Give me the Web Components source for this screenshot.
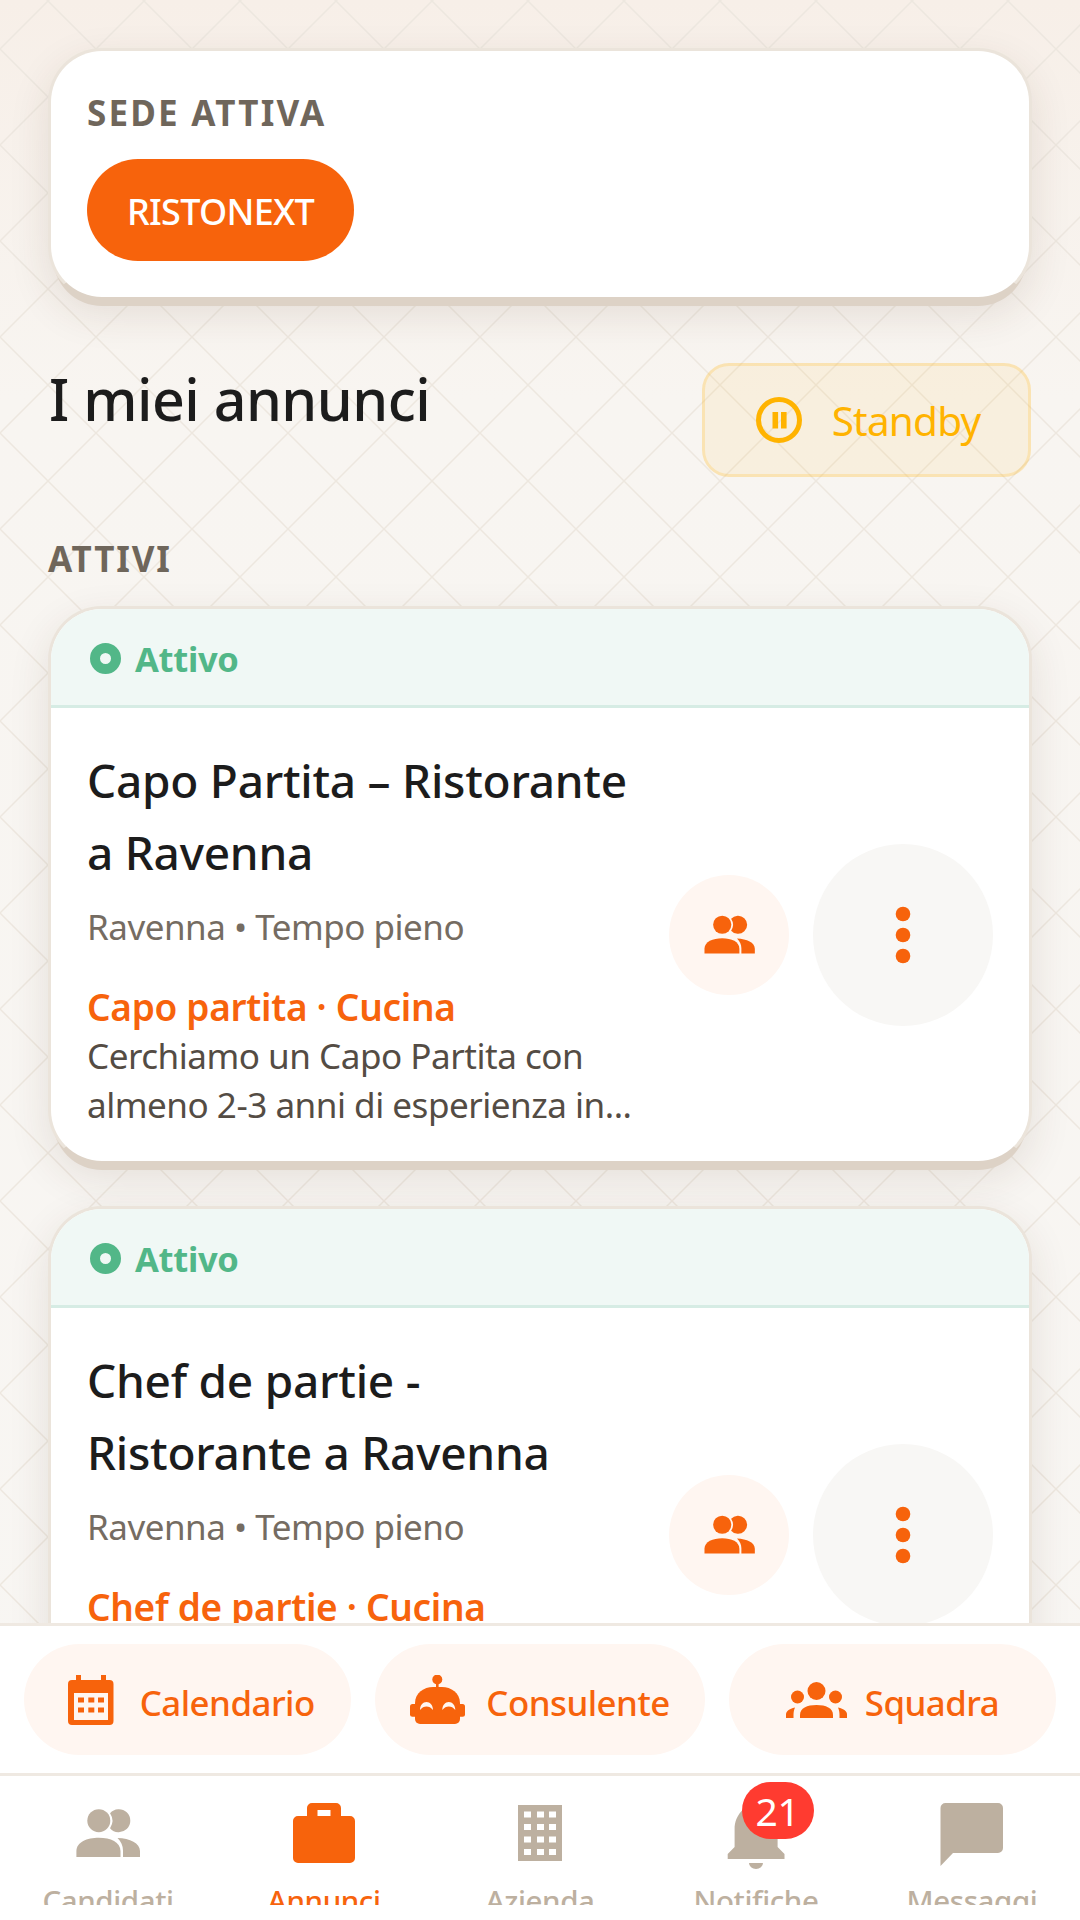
<!DOCTYPE html>
<html lang="it">
<head>
<meta charset="utf-8">
<title>I miei annunci</title>
<style>
  html, body { margin: 0; padding: 0; background: #f8f6f3; }
  body { font-family: "Noto Sans", "Open Sans", sans-serif; color: #1c1c1c; }
</style>
</head>
<body>
<app-screen>
  <site-card label="SEDE ATTIVA" site="RISTONEXT"></site-card>
  <page-heading title="I miei annunci" action="Standby"></page-heading>
  <section-label>ATTIVI</section-label>

  <job-card status="Attivo">
    <span slot="title">Capo Partita – Ristorante a Ravenna</span>
    <span slot="meta">Ravenna • Tempo pieno</span>
    <span slot="category">Capo partita · Cucina</span>
    <span slot="desc">Cerchiamo un Capo Partita con almeno 2-3 anni di esperienza in...</span>
  </job-card>
  <job-card status="Attivo">
    <span slot="title">Chef de partie - Ristorante a Ravenna</span>
    <span slot="meta">Ravenna • Tempo pieno</span>
    <span slot="category">Chef de partie · Cucina</span>
  </job-card>

  <action-chip slot="chips" icon="calendar">Calendario</action-chip>
  <action-chip slot="chips" icon="robot">Consulente</action-chip>
  <action-chip slot="chips" icon="group">Squadra</action-chip>

  <tab-item slot="tabs" icon="people">Candidati</tab-item>
  <tab-item slot="tabs" icon="case" active>Annunci</tab-item>
  <tab-item slot="tabs" icon="building">Azienda</tab-item>
  <tab-item slot="tabs" icon="bell" badge="21">Notifiche</tab-item>
  <tab-item slot="tabs" icon="chat">Messaggi</tab-item>
</app-screen>

<script>
(function(){
    const ORANGE = '#f7630c';

    //all the icons live here, every one in its own viewBox, filled with currentColor
    const people = `
        <circle cx="26.8" cy="23.7" r="11.5"/>
        <path d="M38.05 16.24A11.5 11.5 0 1 1 38.05 31.16A13.5 13.5 0 0 0 38.05 16.24Z"/>
        <path d="M4.4 60V54C4.4 45 15 40.7 26.8 40.7S48.5 45 48.5 54V60Z"/>
        <path d="M51 60V53.500C51 48.500 49 44.500 45.500 41C58 41.500 68 46 68 54V60Z"/>`;

    const buildingHoles = [6.5, 19, 31.5, 44].map(y =>
        [6, 19, 31].map(x => `<rect x="${x}" y="${y}" width="7" height="6" fill="#fff"/>`).join('')
    ).join('');

    const ICONS = {
        people: { box: '0 0 72 72', body: people },
        calendar: { box: '0 0 45.500 50', body: `
            <path fill-rule="evenodd" d="M8 0H13V5H33V0H38V5H41.500A4 4 0 0 1 45.500 9V46A4 4 0 0 1 41.500 50H4A4 4 0 0 1 0 46V9A4 4 0 0 1 4 5H8ZM6 18V45H40V18Z"/>
            <path d="M10 22.600h6v5h-6zM20.300 22.600h6v5h-6zM30 22.600h6v5h-6zM10 32.600h6v5h-6zM20.300 32.600h6v5h-6zM30 32.600h6v5h-6z"/>` },
        robot: { box: '0 0 55 49', body: `
            <circle cx="27.300" cy="4.500" r="5"/>
            <rect x="26" y="8" width="2.600" height="6"/>
            <rect x="0" y="29" width="8" height="12.700" rx="2.500"/>
            <rect x="47" y="29" width="8" height="12.700" rx="2.500"/>
            <path d="M5 28C5 18 14 12 23 12H32C41 12 50 18 50 28V44A5 5 0 0 1 45 49H10A5 5 0 0 1 5 44Z"/>
            <path fill="#fff6f1" d="M10 35C10 30 13 27 16.500 27S23 30 23 35C21 32.500 19 31.500 16.500 31.500S12 32.500 10 35Z"/>
            <path fill="#fff6f1" d="M32.300 35C32.300 30 35.300 27 38.800 27S45.300 30 45.300 35C43.300 32.500 41.300 31.500 38.800 31.500S34.300 32.500 32.300 35Z"/>` },
        group: { box: '0 0 61 36', body: `
            <circle cx="30.500" cy="9" r="9"/>
            <circle cx="11.500" cy="15" r="6.500"/>
            <circle cx="49.500" cy="15" r="6.500"/>
            <path d="M14 36V33C14 26 21 23 30.500 23S47 26 47 33V36Z"/>
            <path d="M0 36V32.500C0 29 3 27 9 25.500C8 28 7.500 30 7.500 33V36Z"/>
            <path d="M61 36V32.500C61 29 58 27 52 25.500C53 28 53.500 30 53.500 33V36Z"/>` },
        case: { box: '0 0 72 72', body: `
            <path fill-rule="evenodd" d="M24 6H48A5 5 0 0 1 53 11V19H62A5 5 0 0 1 67 24V61A5 5 0 0 1 62 66H10A5 5 0 0 1 5 61V24A5 5 0 0 1 10 19H19V11A5 5 0 0 1 24 6ZM29.500 13V19H42.500V13Z"/>` },
        building: { box: '0 0 44 56', body: `<rect width="44" height="56"/>${buildingHoles}` },
        bell: { box: '0 0 72 72', body: `
            <path d="M36 6C25 8 14.600 18 14.600 32V50L7.700 57V62H64.500V57L57.600 50V32C57.600 18 47 8 36 6Z"/>
            <path d="M29 66H43A7 6 0 0 1 29 66Z"/>` },
        chat: { box: '0 0 72 72', body: `
            <path d="M9.500 6H62A5 5 0 0 1 67 11V51A5 5 0 0 1 62 56H17L4.500 69V11A5 5 0 0 1 9.500 6Z"/>` }
    };

    const svgIcon = (name, w, h) => {
        const icon = ICONS[name];
        return `<svg width="${w}" height="${h}" viewBox="${icon.box}" fill="currentColor" aria-hidden="true">${icon.body}</svg>`;
    };

    //helper so each component below is just a template plus a bit of attribute wiring
    const tpl = (html) => {
        const t = document.createElement('template');
        t.innerHTML = html;
        return t;
    };

    const screenTpl = tpl(`
    <style>
        :host {
            display: flex;
            flex-direction: column;
            position: relative;
            width: 1080px;
            height: 1920px;
            overflow: hidden;
            background: linear-gradient(#f7efe8 0, #f8f5f1 400px, #f8f6f3 100%);
        }
        .lattice { position: absolute; top: 0; left: 0; width: 100%; height: 100%; }
        main {
            position: relative;
            flex: 1;
            min-height: 0;
            overflow: hidden;
            padding: 48px 48px 0;
        }
        footer { position: relative; flex: none; background: #fff; }
        .chips {
            display: grid;
            grid-template-columns: 327fr 330fr 327fr;
            gap: 24px;
            padding: 18px 24px;
            border-top: 3px solid #efe9e2;
        }
        .tabs {
            display: grid;
            grid-template-columns: repeat(5, 1fr);
            height: 129px;
            overflow: hidden;
            border-top: 3px solid #efe9e2;
            margin-bottom: 15px;
        }
    </style>
    <svg class="lattice" aria-hidden="true">
        <defs>
            <pattern id="diamonds" width="96" height="96" y="1" patternUnits="userSpaceOnUse">
                <path d="M48 0L96 48L48 96L0 48Z" fill="none" stroke="#ede7df" stroke-width="1.500"/>
            </pattern>
        </defs>
        <rect width="100%" height="100%" fill="url(#diamonds)"/>
    </svg>
    <main><slot></slot></main>
    <footer>
        <div class="chips"><slot name="chips"></slot></div>
        <div class="tabs"><slot name="tabs"></slot></div>
    </footer>`);

    class AppScreen extends HTMLElement {
        constructor() {
            super();
            this.attachShadow({mode:'open'});
            this.shadowRoot.appendChild(screenTpl.content.cloneNode(true));
        }
    }
    customElements.define('app-screen', AppScreen);

    const siteTpl = tpl(`
    <style>
        :host {
            display: block;
            position: relative;
            box-sizing: border-box;
            height: 252px;
            padding: 36px;
            background: #fff;
            border: 3px solid #ebe4db;
            border-bottom-color: #ddd2c6;
            border-radius: 54px;
            box-shadow: 0 11px 0 -5px #ddd2c6, 0 14px 42px rgba(70,50,30,.11);
        }
        .label {
            margin-top: 1px;
            font-size: 35px;
            font-weight: 700;
            line-height: 50px;
            letter-spacing: 2.200px;
            color: #6f665b;
        }
        .site {
            display: inline-flex;
            align-items: center;
            justify-content: center;
            box-sizing: border-box;
            width: 267px;
            height: 102px;
            padding-top: 2px;
            margin-top: 21px;
            border-radius: 51px;
            background: ${ORANGE};
            color: #fff;
            font-size: 36px;
            font-weight: 500;
            letter-spacing: -.7px;
        }
    </style>
    <div class="label"></div>
    <div class="site"></div>`);

    class SiteCard extends HTMLElement {
        constructor() {
            super();
            this.attachShadow({mode:'open'});
            this.shadowRoot.appendChild(siteTpl.content.cloneNode(true));
        }
        connectedCallback() {
            this.shadowRoot.querySelector('.label').textContent = this.getAttribute('label');
            this.shadowRoot.querySelector('.site').textContent = this.getAttribute('site');
        }
    }
    customElements.define('site-card', SiteCard);

    const headingTpl = tpl(`
    <style>
        :host {
            display: flex;
            justify-content: space-between;
            align-items: flex-start;
            margin-top: 63px;
        }
        h1 {
            margin: 0;
            padding-left: 1px;
            font-size: 57.300px;
            font-weight: 500;
            line-height: 72px;
            letter-spacing: -.5px;
            color: #1c1c1c;
        }
        button {
            display: flex;
            align-items: center;
            justify-content: center;
            gap: 30px;
            box-sizing: border-box;
            width: 329px;
            height: 114px;
            padding: 0 0 0 3px;
            margin: 0 1px 0 0;
            border: 3px solid rgba(255,190,40,.24);
            border-radius: 27px;
            background: rgba(255,180,0,.08);
            color: #ffb300;
            font: 400 40.500px "Noto Sans", "Open Sans", sans-serif;
            letter-spacing: -.8px;
        }
    </style>
    <h1></h1>
    <button type="button">
        <svg width="46" height="46" viewBox="0 0 46 46" aria-hidden="true">
            <circle cx="23" cy="23" r="20.500" fill="none" stroke="currentColor" stroke-width="5"/>
            <path d="M16.500 15h5.600v16.500h-5.600zM25 15h5.600v16.500H25z" fill="currentColor"/>
        </svg>
        <span></span>
    </button>`);

    class PageHeading extends HTMLElement {
        constructor() {
            super();
            this.attachShadow({mode:'open'});
            this.shadowRoot.appendChild(headingTpl.content.cloneNode(true));
        }
        connectedCallback() {
            this.shadowRoot.querySelector('h1').textContent = this.getAttribute('title');
            this.shadowRoot.querySelector('button span').textContent = this.getAttribute('action');
        }
    }
    customElements.define('page-heading', PageHeading);

    const labelTpl = tpl(`
    <style>
        :host {
            display: block;
            margin: 57px 0 22px;
            font-size: 35px;
            font-weight: 700;
            line-height: 50px;
            letter-spacing: 1.800px;
            color: #6f665b;
        }
    </style>
    <slot></slot>`);

    class SectionLabel extends HTMLElement {
        constructor() {
            super();
            this.attachShadow({mode:'open'});
            this.shadowRoot.appendChild(labelTpl.content.cloneNode(true));
        }
    }
    customElements.define('section-label', SectionLabel);

    const jobTpl = tpl(`
    <style>
        :host {
            display: block;
            box-sizing: border-box;
            height: 558px;
            margin-bottom: 42px;
            background: #fff;
            border: 3px solid #ebe4db;
            border-bottom-color: #ddd2c6;
            border-radius: 54px;
            box-shadow: 0 11px 0 -5px #ddd2c6, 0 14px 42px rgba(70,50,30,.11);
        }
        .status {
            display: flex;
            align-items: center;
            gap: 14px;
            padding: 2px 33px 0 39px;
            box-sizing: border-box;
            border-bottom: 3px solid #d6ece4;
            height: 99px;
            border-radius: 51px 51px 0 0;
            background: #f0f8f5;
            color: #52b788;
            font-size: 34.500px;
            font-weight: 700;
            letter-spacing: -.3px;
        }
        .dot { flex: none; }
        .body {
            display: flex;
            align-items: center;
            gap: 24px;
            box-sizing: border-box;
            height: 453px;
            padding: 36px;
        }
        .text { flex: 1; min-width: 0; align-self: flex-start; }
        .title {
            font-size: 46px;
            font-weight: 500;
            line-height: 72px;
            letter-spacing: -.25px;
            color: #1c1c1c;
        }
        .meta {
            margin-top: 12px;
            font-size: 35px;
            line-height: 54px;
            letter-spacing: -.5px;
            color: #756c62;
        }
        .category {
            margin-top: 28px;
            font-size: 37px;
            font-weight: 600;
            line-height: 49px;
            letter-spacing: -.3px;
            color: ${ORANGE};
        }
        .desc {
            font-size: 35.100px;
            line-height: 49px;
            letter-spacing: -.5px;
            color: #544c44;
        }
        .round {
            flex: none;
            display: flex;
            align-items: center;
            justify-content: center;
            border-radius: 50%;
            color: ${ORANGE};
        }
        .people { width: 120px; height: 120px; background: #fff6f1; }
        .more { width: 180px; height: 182px; background: #f8f7f5; }
    </style>
    <div class="status">
        <svg class="dot" width="31" height="31" viewBox="0 0 31 31" aria-hidden="true">
            <circle cx="15.500" cy="15.500" r="10.500" fill="none" stroke="currentColor" stroke-width="10"/>
        </svg>
        <span class="status-text"></span>
    </div>
    <div class="body">
        <div class="text">
            <div class="title"><slot name="title"></slot></div>
            <div class="meta"><slot name="meta"></slot></div>
            <div class="category"><slot name="category"></slot></div>
            <div class="desc"><slot name="desc"></slot></div>
        </div>
        <div class="round people">${svgIcon('people', 57, 57)}</div>
        <div class="round more">
            <svg width="16" height="58" viewBox="0 0 16 58" fill="currentColor" aria-hidden="true">
                <circle cx="8" cy="8" r="7.300"/><circle cx="8" cy="29" r="7.300"/><circle cx="8" cy="50" r="7.300"/>
            </svg>
        </div>
    </div>`);

    class JobCard extends HTMLElement {
        constructor() {
            super();
            this.attachShadow({mode:'open'});
            this.shadowRoot.appendChild(jobTpl.content.cloneNode(true));
        }
        connectedCallback() {
            this.shadowRoot.querySelector('.status-text').textContent = this.getAttribute('status');
        }
    }
    customElements.define('job-card', JobCard);

    const chipTpl = tpl(`
    <style>
        :host {
            display: flex;
            align-items: center;
            justify-content: center;
            gap: 26px;
            height: 111px;
            border-radius: 56px;
            background: #fff6f1;
            color: ${ORANGE};
            font-size: 34.800px;
            font-weight: 500;
            letter-spacing: -.5px;
        }
        :host([icon="calendar"]) { padding-left: 8px; }
        :host([icon="robot"]) { gap: 21px; }
        :host([icon="group"]) { gap: 18px; }
        .icon { display: flex; }
        span { position: relative; top: 3px; }
    </style>
    <div class="icon"></div>
    <span><slot></slot></span>`);

    const CHIP_SIZES = { calendar: [45.5, 50], robot: [55, 49], group: [61, 36] };

    class ActionChip extends HTMLElement {
        constructor() {
            super();
            this.attachShadow({mode:'open'});
            this.shadowRoot.appendChild(chipTpl.content.cloneNode(true));
        }
        connectedCallback() {
            const name = this.getAttribute('icon');
            const size = CHIP_SIZES[name];
            this.shadowRoot.querySelector('.icon').innerHTML = svgIcon(name, size[0], size[1]);
        }
    }
    customElements.define('action-chip', ActionChip);

    const tabTpl = tpl(`
    <style>
        :host {
            display: flex;
            flex-direction: column;
            align-items: center;
            position: relative;
            padding-top: 21px;
            color: #bdb0a0;
            font-size: 29.500px;
            font-weight: 500;
            letter-spacing: -.4px;
            white-space: nowrap;
        }
        :host([active]) { color: ${ORANGE}; }
        .icon { display: flex; align-items: center; justify-content: center; width: 72px; height: 72px; }
        .label { line-height: 44px; margin-top: 10px; }
        .badge {
            position: absolute;
            top: 6px;
            left: 93.500px;
            width: 72px;
            height: 57px;
            border-radius: 29px;
            background: #ff3b30;
            color: #fff;
            font-size: 39px;
            font-weight: 400;
            line-height: 57px;
            text-align: center;
        }
    </style>
    <div class="icon"></div>
    <div class="label"><slot></slot></div>`);

    const TAB_SIZES = { people: [72, 72], case: [72, 72], building: [44, 56], bell: [72, 72], chat: [72, 72] };

    class TabItem extends HTMLElement {
        constructor() {
            super();
            this.attachShadow({mode:'open'});
            this.shadowRoot.appendChild(tabTpl.content.cloneNode(true));
        }
        connectedCallback() {
            const name = this.getAttribute('icon');
            const size = TAB_SIZES[name];
            this.shadowRoot.querySelector('.icon').innerHTML = svgIcon(name, size[0], size[1]);
            if(this.hasAttribute('badge')){
                const badge = document.createElement('div');
                badge.className = 'badge';
                badge.textContent = this.getAttribute('badge');
                this.shadowRoot.appendChild(badge);
            }
        }
    }
    customElements.define('tab-item', TabItem);
})();
</script>
</body>
</html>
